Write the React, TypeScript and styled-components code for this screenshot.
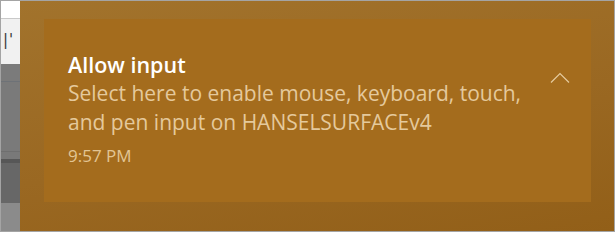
import React from "react";
import styled, { createGlobalStyle } from "styled-components";

const GlobalStyle = createGlobalStyle`
  html, body {
    margin: 0;
    padding: 0;
    background: #ffffff;
  }
`;

const Frame = styled.div`
  width: 615px;
  height: 232px;
  box-sizing: border-box;
  border: 1px solid #a4a4a4;
  display: flex;
  overflow: hidden;
  font-family: "Open Sans", "Noto Sans", sans-serif;
`;

const Backdrop = styled.div`
  width: 19px;
  display: flex;
  flex-direction: column;
  flex-shrink: 0;
`;

const Strip = styled.div<{ $h: number; $bg: string; $line?: string }>`
  height: ${(p) => p.$h}px;
  flex-shrink: 0;
  background: ${(p) => p.$bg};
  border-bottom: ${(p) => (p.$line ? `1px solid ${p.$line}` : "none")};
  box-sizing: border-box;
  overflow: hidden;
`;

const StripFill = styled.div`
  flex: 1;
  background: #8b8b8b;
`;

const Glyph = styled.span`
  display: block;
  padding: 14px 0 0 2px;
  font-family: "DejaVu Sans", sans-serif;
  font-size: 15px;
  line-height: 1;
  color: #3a3a3a;
  letter-spacing: 1px;
`;

const Acrylic = styled.div`
  flex: 1;
  padding: 18px 23px 29px 24px;
  background: linear-gradient(170deg, #a2732c 0%, #9a6822 55%, #925f18 100%);
  display: flex;
`;

const Toast = styled.div`
  flex: 1;
  background: #a46c1d;
  display: flex;
  padding: 32px 21px 0 24px;
`;

const Body = styled.div`
  flex: 1;
  display: flex;
  flex-direction: column;
`;

const Title = styled.div`
  color: #ffffff;
  font-weight: 600;
  font-size: 21.5px;
  line-height: 28px;
`;

const Message = styled.div`
  color: #e4c99c;
  font-size: 21px;
  line-height: 29px;
`;

const Time = styled.div`
  color: #e2c594;
  font-size: 17px;
  line-height: 20px;
  margin-top: 9px;
`;

const Collapse = styled.button`
  width: 20px;
  height: 12px;
  margin-top: 21px;
  padding: 0;
  border: none;
  background: transparent;
  display: flex;
  cursor: pointer;
`;

export default function App() {
  return (
    <>
      <GlobalStyle />
      <Frame>
        <Backdrop>
          <Strip $h={18} $bg="#ffffff" $line="#c9c9c9" />
          <Strip $h={45} $bg="#f1f1f1">
            <Glyph>|'</Glyph>
          </Strip>
          <Strip $h={18} $bg="#7b7b7b" $line="#6e7277" />
          <Strip $h={70} $bg="#7a7a7a" $line="#6f6f6f" />
          <Strip $h={7} $bg="#797979" />
          <Strip $h={4} $bg="#575757" />
          <Strip $h={40} $bg="#676767" />
          <StripFill />
        </Backdrop>
        <Acrylic>
          <Toast>
            <Body>
              <Title>Allow input</Title>
              <Message>
                Select here to enable mouse, keyboard, touch,
                <br />
                and pen input on HANSELSURFACEv4
              </Message>
              <Time>9:57 PM</Time>
            </Body>
            <Collapse aria-label="Collapse">
              <svg width="20" height="12" viewBox="0 0 20 12">
                <path d="M1 10.5 L10 1.5 L19 10.5" fill="none" stroke="#e6cc9f" strokeWidth="1.2" />
              </svg>
            </Collapse>
          </Toast>
        </Acrylic>
      </Frame>
    </>
  );
}
